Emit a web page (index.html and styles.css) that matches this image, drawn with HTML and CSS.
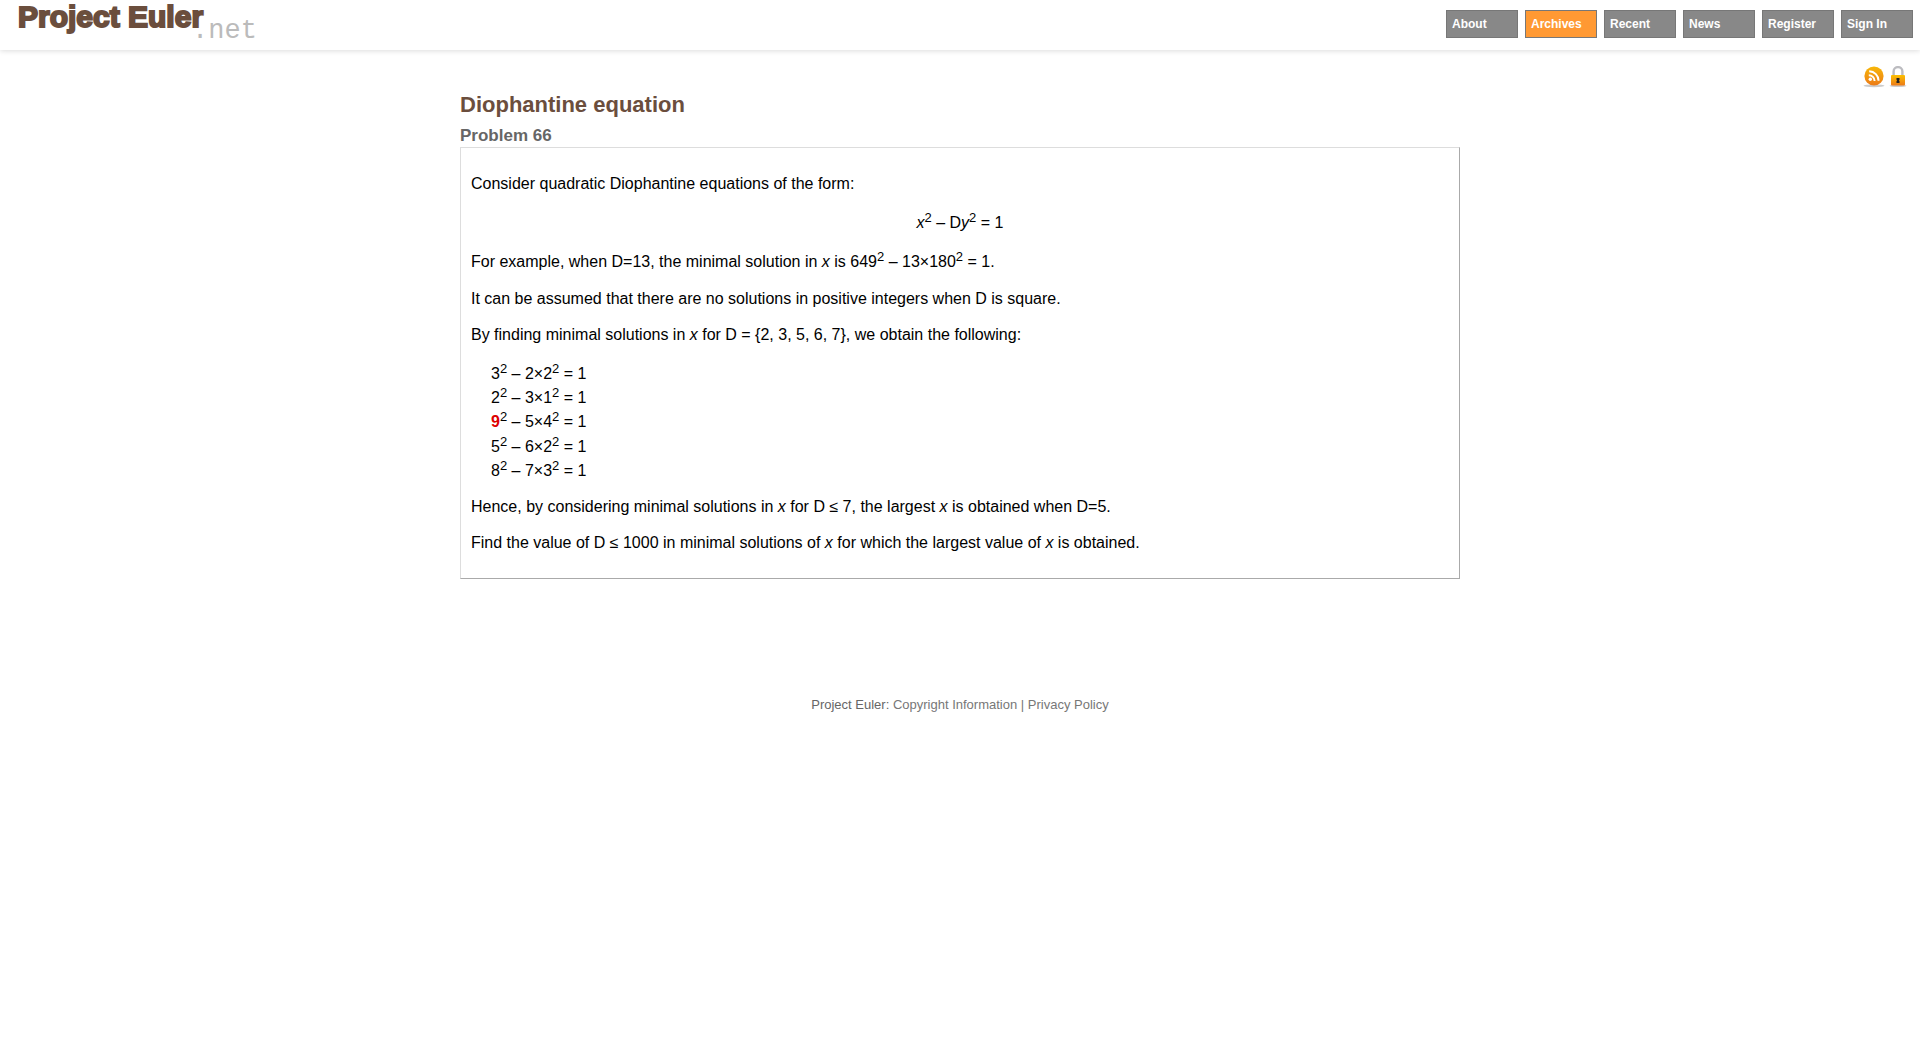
FILE: index.html
```html
<!DOCTYPE html>
<html lang="en">
<head>
<meta charset="utf-8">
<title>Problem 66 - Project Euler</title>
<link rel="stylesheet" href="styles.css">
</head>
<body>
<header class="header">
  <a class="logo" href="#"><span class="logo-name">Project Euler</span><span class="logo-suffix">.net</span></a>
  <nav class="nav" aria-label="Main">
    <a href="#">About</a>
    <a href="#" class="current">Archives</a>
    <a href="#">Recent</a>
    <a href="#">News</a>
    <a href="#">Register</a>
    <a href="#">Sign In</a>
  </nav>
</header>
<div class="tools">
  <a href="#" aria-label="RSS feed">
    <svg width="22" height="22" viewBox="0 0 22 22">
      <defs><linearGradient id="rss" x1="0" y1="0" x2="0" y2="1"><stop offset="0" stop-color="#f8b808"/><stop offset="1" stop-color="#ec7a18"/></linearGradient></defs>
      <ellipse cx="11" cy="19.8" rx="10.5" ry="1.4" fill="#ccc"/>
      <circle cx="11" cy="10" r="9.6" fill="url(#rss)"/>
      <circle cx="7.3" cy="13.3" r="1.7" fill="#fff"/>
      <path d="M5.8 9.2a5.8 5.8 0 0 1 5.8 5.8M6.2 5.3a9.5 9.5 0 0 1 9.4 9.5" fill="none" stroke="#fff" stroke-width="2"/>
    </svg>
  </a>
  <a href="#" aria-label="Secure connection">
    <svg width="18" height="22" viewBox="0 0 18 22">
      <defs><linearGradient id="lock" x1="0" y1="0" x2="0" y2="1"><stop offset="0" stop-color="#fcc000"/><stop offset="1" stop-color="#ec7a18"/></linearGradient></defs>
      <ellipse cx="9" cy="19.8" rx="8.5" ry="1.2" fill="#ccc"/>
      <path d="M4.6 10V5.500a4.400 4.400 0 0 1 8.800 0V10" fill="none" stroke="#bcbcc0" stroke-width="2.4"/>
      <rect x="2" y="9" width="14" height="10.500" rx="1" fill="url(#lock)"/>
      <path d="M7.500 12h3v1.800l-.7.700.7.600V17h-3v-1.900l.7-.6-.7-.7z" fill="#222"/>
    </svg>
  </a>
</div>
<main class="content">
  <h1>Diophantine equation</h1>
  <h2>Problem 66</h2>
  <div class="problem">
    <p>Consider quadratic Diophantine equations of the form:</p>
    <p class="formula"><i>x</i><sup>2</sup> – D<i>y</i><sup>2</sup> = 1</p>
    <p>For example, when D=13, the minimal solution in <i>x</i> is 649<sup>2</sup> – 13×180<sup>2</sup> = 1.</p>
    <p>It can be assumed that there are no solutions in positive integers when D is square.</p>
    <p>By finding minimal solutions in <i>x</i> for D = {2, 3, 5, 6, 7}, we obtain the following:</p>
    <p class="solutions">3<sup>2</sup> – 2×2<sup>2</sup> = 1<br>
    2<sup>2</sup> – 3×1<sup>2</sup> = 1<br>
    <b>9</b><sup>2</sup> – 5×4<sup>2</sup> = 1<br>
    5<sup>2</sup> – 6×2<sup>2</sup> = 1<br>
    8<sup>2</sup> – 7×3<sup>2</sup> = 1</p>
    <p>Hence, by considering minimal solutions in <i>x</i> for D ≤ 7, the largest <i>x</i> is obtained when D=5.</p>
    <p>Find the value of D ≤ 1000 in minimal solutions of <i>x</i> for which the largest value of <i>x</i> is obtained.</p>
  </div>
</main>
<footer class="footer">
  <span class="owner">Project Euler:</span> <a href="#">Copyright Information</a> | <a href="#">Privacy Policy</a>
</footer>
</body>
</html>
```
FILE: styles.css
```css
body {
  margin: 0;
  background: #fff;
  color: #000;
  font: 16px/21px "Liberation Sans", Arial, sans-serif;
}
a { color: inherit; text-decoration: none; }

.header {
  display: flex;
  justify-content: space-between;
  align-items: flex-start;
  box-sizing: border-box;
  height: 50px;
  padding: 0 7px 0 18px;
  box-shadow: 0 1px 5px #ddd;
}
.logo { display: flex; align-items: flex-start; }
.logo-name {
  font-size: 30px;
  line-height: 33px;
  font-weight: bold;
  color: #6b4e3d;
  -webkit-text-stroke: 2px #6b4e3d;
}
.logo-suffix {
  margin: 17px 0 0 -11px;
  font: 27px/28px "Liberation Mono", "Courier New", monospace;
  color: #bbb;
}
.nav { display: flex; gap: 7px; padding-top: 10px; }
.nav a {
  box-sizing: border-box;
  width: 72px;
  height: 28px;
  padding-left: 5px;
  border: 1px solid #777;
  background: #888;
  color: #fff;
  font-size: 12px;
  line-height: 26px;
  font-weight: bold;
}
.nav .current { background: #f93; }

.tools {
  display: flex;
  justify-content: flex-end;
  gap: 4px;
  padding: 16px 13px 0;
}
.tools svg { display: block; }

.content { max-width: 1000px; margin: 0 auto; }
h1 { margin: 2px 0 0; font-size: 22px; line-height: 30px; color: #6b4e3d; }
h2 { margin: 5px 0 0; font-size: 17px; line-height: 22px; color: #666; }
.problem {
  padding: 10px;
  border: 1px solid #ddd;
  border-right-color: #aaa;
  border-bottom-color: #aaa;
}
.problem p { margin: 15px 0; }
.problem .formula { text-align: center; }
.problem .solutions { margin-left: 20px; }
.problem b { color: #d00; }
sup { font-size: 13px; line-height: 17px; }

.footer {
  margin-top: 115px;
  text-align: center;
  font-size: 13px;
  color: #777;
}
.owner { color: #666; }
```
